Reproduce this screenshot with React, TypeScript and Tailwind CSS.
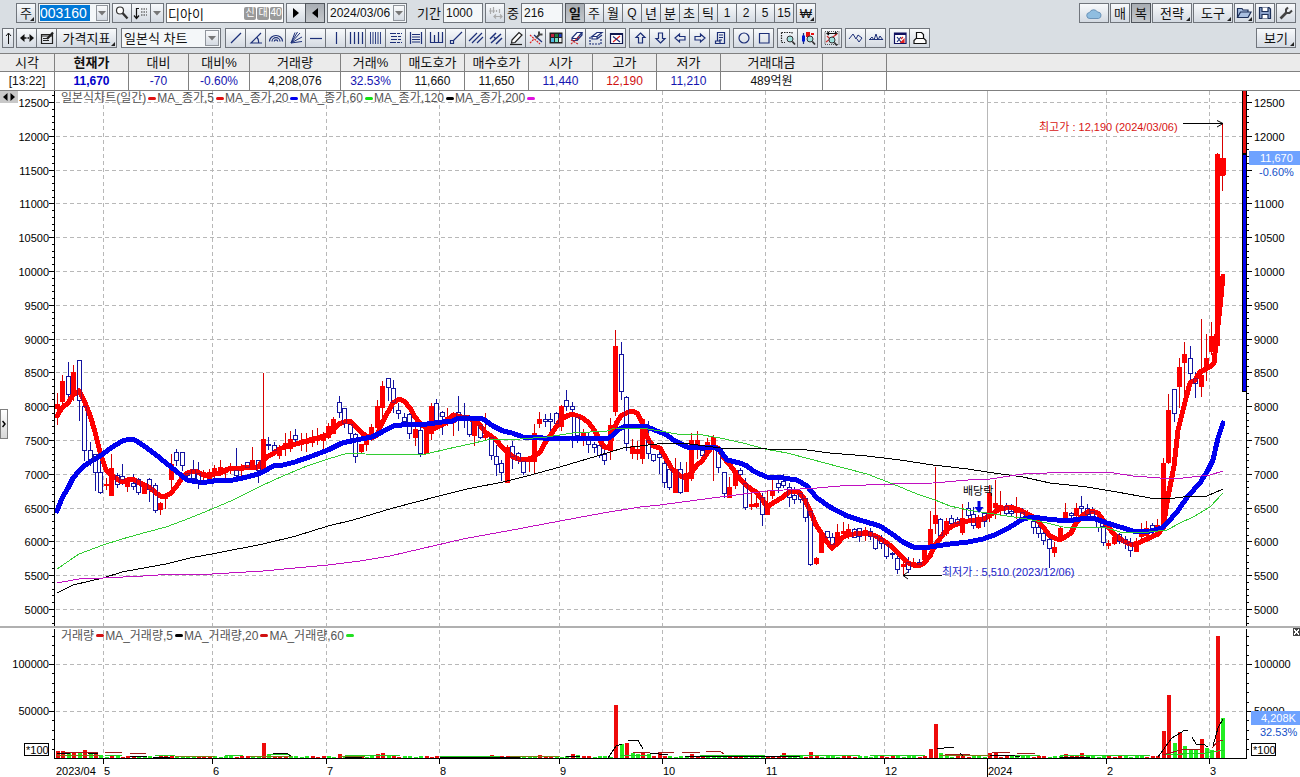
import React from "react";

type Candle = [number, number, number, number, 0 | 1];

const UP = "#fe0000";
const DOWN = "#1414a0";
const GREEN = "#22ee22";

const STEP = 5.42;
const X0 = 57;

// high, body top, body bottom, low (chart rows), 1 = rising / 0 = falling
const RAW =
  "393,404,408,424,1 375,381,401,403,1 362,376,394,400,0 365,372,395,400,1 360,360,400,420,0 402,406,450,460,0 442,450,462,465,0 454,454,472,490,0 460,472,492,493,0 478,484,485,489,1 " +
  "454,468,495,495,1 473,475,484,487,0 464,476,479,484,0 477,479,486,491,1 474,483,486,489,0 478,479,492,494,0 482,483,493,493,1 478,479,489,501,0 483,485,510,512,0 502,503,509,514,1 " +
  "493,494,498,508,1 454,464,479,487,1 449,452,460,465,0 452,452,465,470,0 470,473,475,480,0 460,469,478,483,0 462,473,483,488,0 470,472,475,480,1 469,472,478,483,1 465,468,472,477,1 " +
  "460,467,472,475,1 467,468,472,477,1 463,466,470,473,1 448,470,475,477,0 464,467,470,475,1 462,462,467,469,0 447,460,464,468,1 460,460,470,482,0 373,439,471,473,1 437,444,445,449,0 " +
  "442,445,450,453,0 445,448,455,458,1 433,443,447,455,1 431,439,448,451,1 429,435,439,442,0 433,440,444,450,1 433,439,443,451,1 430,438,442,446,1 428,437,440,444,1 432,437,440,451,1 " +
  "423,426,437,438,1 417,419,433,433,1 396,402,412,417,0 408,408,423,427,0 422,424,433,440,0 433,434,456,462,0 444,444,451,453,1 433,436,444,450,1 424,427,437,440,1 400,406,427,435,1 " +
  "381,386,407,423,1 378,378,387,400,0 380,388,402,412,0 403,410,413,418,0 413,417,421,424,0 413,414,433,438,0 427,429,437,445,1 427,430,453,456,0 428,428,453,453,1 403,406,433,439,1 " +
  "399,403,423,427,0 411,412,416,434,0 408,417,420,425,1 412,414,422,435,1 396,412,416,430,0 403,415,417,427,0 415,420,434,436,0 420,421,435,445,1 422,425,437,438,0 413,435,437,440,1 " +
  "437,437,455,459,0 445,456,464,475,0 460,463,472,480,0 445,447,482,482,1 441,446,456,468,0 452,453,460,463,0 457,461,472,474,0 456,457,461,471,1 424,433,461,472,1 412,419,423,427,1 " +
  "414,419,421,426,0 413,419,421,433,0 412,413,423,427,0 405,406,426,430,1 390,400,406,410,0 402,406,409,447,0 414,417,435,442,0 429,433,437,445,1 432,437,444,452,0 442,444,447,452,0 " +
  "437,445,455,457,0 448,454,460,464,0 418,425,450,459,1 330,346,411,415,1 342,354,391,399,0 396,397,443,450,0 439,446,453,458,1 441,449,453,459,1 418,419,458,463,1 421,440,453,458,0 " +
  "454,454,460,461,0 450,454,457,473,0 455,463,482,487,0 463,469,487,489,0 458,469,492,492,1 462,469,492,493,0 462,473,491,491,1 433,440,478,480,1 431,440,448,458,1 447,450,455,460,0 " +
  "438,442,452,455,1 435,437,444,480,1 447,448,467,472,0 472,472,493,497,0 477,487,497,497,1 468,470,485,488,1 468,470,474,478,0 478,483,507,509,0 493,504,506,509,1 494,503,506,507,1 " +
  "493,497,514,525,0 491,505,514,514,1 477,490,495,498,1 478,483,487,492,0 474,481,485,487,0 483,487,497,506,0 487,495,499,503,0 490,493,499,502,0 497,498,517,521,0 508,511,564,565,0 " +
  "557,558,563,564,1 530,533,552,552,1 531,531,537,543,0 533,537,544,548,0 524,532,543,543,1 522,531,533,537,1 524,529,533,538,1 528,529,537,537,0 528,528,536,541,0 527,530,534,540,1 " +
  "528,531,536,539,0 533,536,548,549,0 535,538,543,548,0 542,544,556,558,0 552,553,554,558,0 552,558,569,573,0 562,564,566,575,1 557,562,569,572,0 558,562,565,567,1 559,562,564,567,0 " +
  "547,548,559,559,1 511,529,548,550,1 467,515,523,533,1 518,519,535,536,0 518,521,533,535,1 515,518,523,528,0 517,519,523,526,0 504,518,532,534,1 502,508,515,518,0 507,514,525,528,0 " +
  "515,517,527,528,1 512,513,521,526,0 485,493,517,521,1 480,503,507,518,1 491,505,510,515,1 503,506,513,515,0 504,511,513,515,0 497,508,512,518,1 508,512,517,518,0 510,513,518,520,1 " +
  "518,521,527,533,0 520,527,533,537,0 528,533,540,544,0 535,539,548,567,0 542,547,552,556,1 526,528,538,538,1 503,512,522,522,1 512,513,515,517,0 503,508,515,520,1 496,506,508,512,0 " +
  "504,508,514,515,0 507,511,517,518,0 518,520,527,531,0 525,526,542,545,0 540,543,545,548,1 533,537,543,544,1 533,534,541,543,0 536,539,543,548,0 538,542,550,556,0 538,541,551,551,1 " +
  "523,530,536,538,1 521,528,535,537,1 523,525,530,533,0 519,525,531,532,1 458,463,528,529,1 394,410,462,463,1 389,389,413,421,0 358,367,386,407,1 342,354,362,397,1 346,358,373,385,0 " +
  "372,378,383,397,0 319,375,386,396,1 334,358,366,380,1 322,336,351,354,1 153,154,345,350,1 123,158,175,190,1";

const CANDLES = RAW.split(" ").map((c) => c.split(",").map(Number) as unknown as Candle);

const MA5 =
  "57,416 62,408 68,403 73,395 79,391 84,400 90,415 95,432 100,452 106,470 111,475 117,479 122,482 127,480 133,479 138,482 144,485 149,487 155,492 160,496 166,496 171,493 176,487 182,478 187,473 193,471 198,472 203,475 209,476 214,474 220,473 225,471 230,468 241,468 258,467 262,462 267,457 274,453 279,449 285,447 296,444 306,441 317,438 328,435 333,430 339,424 344,422 350,421 355,426 361,432 366,436 372,438 377,435 382,423 388,412 393,403 399,399 404,401 410,408 415,417 420,423 426,428 431,430 437,427 445,423 453,415 462,417 469,418 475,421 480,425 485,432 491,436 496,440 502,447 507,452 512,456 518,459 523,460 529,459 534,457 540,452 545,443 550,436 556,427 561,419 567,416 572,414 578,416 583,418 589,423 594,430 599,438 603,446 607,448 610,445 613,432 617,422 621,416 626,413 632,411 637,413 642,422 648,439 653,446 660,448 664,455 672,469 680,476 687,478 691,473 697,465 702,461 708,452 713,446 718,448 724,458 729,464 735,472 740,479 746,485 751,489 756,492 762,499 767,507 773,503 778,500 783,497 789,492 794,491 800,493 805,500 811,513 816,525 822,534 827,542 832,548 838,543 843,537 849,535 859,533 870,534 876,536 887,543 892,547 898,553 903,558 908,563 914,565 919,566 924,563 930,556 935,545 941,537 946,531 952,526 960,523 968,521 979,520 984,519 990,515 995,512 1000,509 1011,507 1022,511 1033,517 1038,521 1044,528 1049,535 1054,538 1060,540 1065,537 1071,533 1076,523 1082,516 1087,512 1092,511 1098,513 1103,520 1109,528 1114,534 1119,538 1125,542 1130,544 1136,544 1147,539 1158,534 1163,528 1168,497 1174,466 1178,430 1185,402 1190,383 1195,380 1200,372 1206,369 1211,366 1214,363 1215,353 1220,307 1223,276";
const MA20 =
  "57,511 62,498 68,488 73,478 79,471 84,466 90,462 100,456 111,448 122,441 130,439 135,440 144,446 155,454 166,463 176,471 182,476 187,480 198,482 207,482 220,480 233,480 247,477 258,474 263,472 273,466 283,465 295,462 312,456 328,450 342,443 361,439 372,437 382,432 393,426 410,424 427,424 442,422 453,421 458,418 467,419 477,418 483,419 493,426 503,431 512,433 523,437 543,438 570,438 607,439 613,435 618,430 623,427 632,426 645,426 657,431 667,435 675,441 687,447 702,447 713,447 720,450 727,460 740,463 747,466 755,472 767,477 783,478 797,480 807,486 817,498 830,507 847,516 863,521 880,526 892,534 903,542 913,547 930,547 950,544 968,542 983,539 997,534 1010,527 1023,519 1033,517 1047,519 1067,521 1080,519 1093,518 1107,523 1120,527 1133,531 1150,531 1162,528 1167,523 1177,512 1188,496 1200,483 1208,470 1213,460 1218,438 1223,423";
const MA60 =
  "57,569 79,554 103,545 122,539 147,532 166,527 190,518 212,509 233,500 263,485 283,476 307,466 328,459 348,453 365,454 410,455 426,454 447,449 470,444 487,440 520,439 547,437 573,433 607,431 615,428 648,429 660,431 677,434 697,434 720,438 743,443 765,449 787,453 810,459 840,467 867,474 893,484 917,494 935,500 950,506 968,510 987,513 1007,516 1027,519 1047,523 1063,527 1107,528 1120,532 1140,533 1167,530 1180,523 1193,517 1210,507 1223,493";
const MA120 =
  "57,593 73,585 103,578 122,572 166,564 190,558 212,554 263,544 296,536 328,526 353,520 393,508 439,496 467,489 503,482 527,476 560,467 597,456 623,448 648,445 667,443 690,444 720,448 767,449 807,450 830,453 867,456 900,460 933,465 968,469 987,472 1023,477 1050,483 1087,487 1117,492 1150,498 1168,499 1183,497 1207,496 1223,489";
const MA200 =
  "57,583 79,579 103,578 143,576 173,574 212,574 263,571 295,568 328,565 360,561 390,556 420,549 463,539 507,531 560,521 603,513 640,507 660,505 690,501 720,497 767,491 817,488 840,486 893,484 933,483 968,480 990,479 1023,474 1047,473 1077,472 1107,472 1133,476 1160,478 1183,478 1210,475 1223,471";

// bar heights that rise above the background level, keyed by session index
const TALL: Record<number, [number, 0 | 1]> = {
  0: [7, 1], 1: [7, 1], 2: [5, 0], 3: [6, 1], 4: [5, 0], 5: [8, 1], 6: [4, 0], 7: [5, 1], 8: [3, 0],
  10: [3, 1], 11: [2, 0], 21: [3, 1], 38: [15, 1], 39: [4, 0], 52: [4, 1], 59: [4, 1], 60: [5, 1], 61: [3, 0],
  80: [3, 1], 89: [3, 1], 95: [4, 1], 96: [3, 0], 103: [53, 1], 104: [14, 0], 105: [15, 1], 106: [5, 0],
  107: [4, 0], 108: [5, 1], 109: [4, 0], 111: [5, 1], 117: [4, 1], 134: [5, 1], 139: [6, 1], 161: [9, 1],
  162: [34, 1], 163: [5, 0], 172: [5, 1], 173: [6, 1], 186: [4, 1], 189: [5, 1], 204: [27, 1], 205: [63, 1],
  206: [15, 0], 207: [26, 1], 208: [12, 0], 209: [8, 0], 210: [8, 0], 211: [19, 1], 212: [10, 0], 213: [8, 0],
  214: [122, 1], 215: [40, 0],
};

const MONTHS: [number, string][] = [
  [103, "5"], [212, "6"], [326, "7"], [439, "8"], [559, "9"], [662, "10"], [765, "11"], [884, "12"], [987, "2024"], [1106, "2"], [1209, "3"],
];
const PRICES = Array.from({ length: 16 }, (_, i) => 12500 - i * 500);
const priceY = (p: number) => Math.round(102 + (12500 - p) * 0.0676) + 0.5;

function Chart() {
  const minor: number[] = [];
  for (let p = 12600; p >= 4800; p -= 100) if (p % 500) minor.push(priceY(p));
  const volMinor: number[] = [];
  for (let v = 1; v < 14; v++) if (v % 5) volMinor.push(Math.round(758 - v * 9.4) + 0.5);
  return (
    <svg viewBox="0 91 1300 686" className="block h-auto w-full font-['Liberation_Sans','Noto_Sans_CJK_KR',sans-serif]" fontSize="11" role="img" aria-label="디아이 일간 차트">
      <g stroke="#b8b8b8" strokeDasharray="4 3" shapeRendering="crispEdges">
        {PRICES.map((p) => <path key={p} d={`M56 ${priceY(p)}H1242`} />)}
        <path d="M56 664.5H1246M56 711.5H1246" />
        {MONTHS.filter((m) => m[1] !== "2024").map(([x]) => <path key={x} d={`M${x + 0.5} 91V757`} />)}
      </g>
      <path d="M987.5 91V757" stroke="#b8b8b8" shapeRendering="crispEdges" />

      <g shapeRendering="crispEdges">
        {CANDLES.map(([h, t, b, l, up], i) => {
          const x = Math.round(X0 + STEP * i);
          return up ? (
            <g key={i} fill={UP}>
              <rect x={x} y={h} width="1" height={l - h + 1} fill="#d80000" />
              <rect x={x - 2} y={t} width="5" height={Math.max(2, b - t + 1)} />
            </g>
          ) : (
            <g key={i}>
              <rect x={x} y={h} width="1" height={l - h + 1} fill={DOWN} />
              <rect x={x - 1.5} y={t + 0.5} width="4" height={Math.max(1, b - t)} fill="#fff" stroke={DOWN} />
            </g>
          );
        })}
        <rect x="1220" y="158" width="6" height="17" fill={UP} />
      </g>

      <g fill="none" strokeLinejoin="round" strokeLinecap="round" shapeRendering="crispEdges">
        <polyline points={MA5} stroke={UP} strokeWidth="5" />
        <polyline points={MA20} stroke="#0000f0" strokeWidth="5" />
      </g>
      <g fill="none" shapeRendering="crispEdges" opacity="0.45" stroke={DOWN}>
        {CANDLES.map(([, t, b, , up], i) =>
          up ? null : <rect key={i} x={Math.round(X0 + STEP * i) - 1.5} y={t + 0.5} width="4" height={Math.max(1, b - t)} />,
        )}
      </g>
      <g fill="none" shapeRendering="crispEdges">
        <polyline points={MA60} stroke="#3c3" />
        <polyline points={MA120} stroke="#000" />
        <polyline points={MA200} stroke="#c010c0" />
      </g>

      <g shapeRendering="crispEdges">
        {CANDLES.map((_, i) => {
          const tall = TALL[i];
          const h = tall ? tall[0] : 1 + ((i * 7) % 3 > 0 ? 1 : 0);
          const red = tall ? tall[1] : (i * 13) % 7 < 3;
          return <rect key={i} x={Math.round(X0 + STEP * i) - 1} y={758 - h} width="4" height={h} fill={red ? "#ee0a0a" : GREEN} />;
        })}
        <g fill="none">
          <path stroke="#7a7a10" d="M57 755H100M175 756H215M250 756H292M340 756H365M510 756H560M940 755H990M1180 753H1200" />
          <path stroke="#2c2" d="M105 755H122M155 755H175M225 755H243M268 754H290M345 755H400M440 756H500M620 755H650M700 755H765M780 755H860M870 755H925M1000 755H1040M1060 755H1150M1162 755L1205 753L1224 750" />
          <path stroke="#a01818" d="M62 752H98M105 752H122M130 753H146M633 752H650M658 752H674M682 752H700M706 751H720L724 754M945 754H970M992 752H1010M1017 753H1035M1162 755L1185 749H1200M1212 748L1217 742L1223 740" />
          <path stroke="#000" d="M57 753H70M88 753H98M130 756H147M153 757H170M273 753H286L291 756M345 757H362M440 757H520M566 756H580M608 758L616 746L622 744M628 741L632 740H638L643 749M650 753L668 755M685 756H800M937 748H944L954 747M960 753L963 756M990 755H1010L1020 757M1060 757H1090M1158 757L1166 746L1172 738L1185 730L1188 731M1192 737L1196 744H1203L1208 747M1213 746L1218 728L1223 719" />
        </g>
      </g>

      <rect x="0" y="626" width="1300" height="2" fill="#b0b0b0" />

      <g fill="#000" shapeRendering="crispEdges">
        <rect x="54" y="91" width="1" height="535" /><rect x="54" y="629" width="1" height="130" />
        <rect x="1246" y="91" width="1" height="535" /><rect x="1246" y="629" width="1" height="130" />
        <rect x="54" y="758" width="1193" height="1" />
        <rect x="1242" y="91" width="5" height="301" />
        <rect x="1243" y="91" width="3" height="62" fill="#e81010" />
        <rect x="1243" y="155" width="3" height="236" fill="#0000f0" />
      </g>
      <g stroke="#000" shapeRendering="crispEdges">
        {PRICES.map((p) => <path key={p} d={`M49 ${priceY(p)}H55M1247 ${priceY(p)}H1252`} />)}
        <path d="M49 664.5H55M49 711.5H55M1247 664.5H1252M1247 711.5H1252" />
        {[...minor, ...volMinor].map((y) => <path key={y} d={`M52 ${y}H55M1247 ${y}H1249`} />)}
        {MONTHS.map(([x, t]) => <path key={x} d={`M${x + 0.5} 758V${t === "2024" ? 777 : 764}`} />)}
      </g>
      <g fill="#000">
        {PRICES.map((p) => (
          <React.Fragment key={p}>
            <text x="49" y={priceY(p) + 4} textAnchor="end">{p}</text>
            {p !== 11500 && <text x="1254" y={priceY(p) + 4}>{p}</text>}
          </React.Fragment>
        ))}
        <text x="49" y="668" textAnchor="end">100000</text>
        <text x="49" y="715" textAnchor="end">50000</text>
        <text x="1254" y="668">100000</text>
        <text x="1254" y="715">50000</text>
        <text x="56" y="775">2023/04</text>
        {MONTHS.map(([x, t]) => <text key={x} x={x + 1} y="775">{t}</text>)}
      </g>
      <g fill="#fff" stroke="#000" shapeRendering="crispEdges">
        <rect x="24.5" y="743.5" width="24" height="12" />
        <rect x="1251.5" y="743.5" width="24" height="12" />
      </g>
      <text x="26" y="754">*100</text>
      <text x="1253" y="754">*100</text>

      <rect x="1249" y="151" width="51" height="14" fill="#6ea2ff" />
      <text x="1260" y="162" fill="#fff">11,670</text>
      <text x="1259" y="176" fill="#1450c8">-0.60%</text>
      <rect x="1251" y="711" width="49" height="14" fill="#6ea2ff" />
      <text x="1261" y="722" fill="#fff">4,208K</text>
      <text x="1260" y="736" fill="#1450c8">32.53%</text>

      <text x="1039" y="131" fill="#d81414">최고가 : 12,190 (2024/03/06)</text>
      <path d="M1183 123.5H1223M1217 120.5L1223 123.5L1217 127" fill="none" stroke="#000" />
      <text x="942" y="576" fill="#2020c8">최저가 : 5,510 (2023/12/06)</text>
      <path d="M942 575.5H903M908 572L903 575.5L908 579" fill="none" stroke="#000" />
      <text x="963" y="495" fill="#000">배당락</text>
      <path d="M977.5 501h3v6h3l-4.500 6l-4.500-6h3z" fill="#0000e0" />

      <g shapeRendering="crispEdges">
        <rect x="1293" y="628" width="7" height="8" fill="#444" />
        <path d="M1294 629.5l5 5M1299 629.500l-5 5" stroke="#fff" />
      </g>
    </svg>
  );
}

// each entry's dash carries its colour after the label; the first dash belongs to the panel name
function Legend({ name, color, items }: { name: string; color: string; items: [string, string][] }) {
  return (
    <ul className="flex items-center gap-px whitespace-nowrap font-['Liberation_Sans','Noto_Sans_CJK_KR',sans-serif] text-[12px] leading-[14px] text-[#555]">
      {[[name, color] as [string, string], ...items].map(([label, dash]) => (
        <li key={label} className="flex items-center gap-px">
          <span className="first:pr-px">{label}</span>
          <span className="h-[3px] w-2 rounded-full" style={{ backgroundColor: dash }} />
        </li>
      ))}
    </ul>
  );
}

const BTN = "relative flex h-5 shrink-0 items-center justify-center border border-[#70757c] bg-linear-to-b from-[#f8fafc] to-[#d4dae2] text-[#111]";
const DARK = "relative flex h-5 shrink-0 items-center justify-center border border-[#50555c] bg-linear-to-b from-[#a8adb3] to-[#c4c8cc] text-[#111]";
const FIELD = "flex h-5 shrink-0 items-center border border-[#70757c] bg-[#f4f7f9]";

function Corner() {
  return <svg className="absolute right-px bottom-px size-1" viewBox="0 0 4 4" aria-hidden="true"><path d="M4 0V4H0z" fill="#222" /></svg>;
}

function Btn({ label, w, dark, menu, joined, children }: { label: string; w: string; dark?: boolean; menu?: boolean; joined?: boolean; children: React.ReactNode }) {
  return (
    <button type="button" aria-label={label} className={`${dark ? DARK : BTN} ${w} ${joined ? "-ml-px" : ""}`}>
      {children}
      {menu && <Corner />}
    </button>
  );
}

function Arrow() {
  return (
    <button type="button" aria-label="목록 열기" className="mr-px flex h-4 w-3 shrink-0 items-center justify-center border border-[#90959c] bg-linear-to-b from-[#fafbfc] to-[#d4dae2]">
      <svg viewBox="0 0 8 5" className="h-[5px] w-2" aria-hidden="true"><path d="M0 0h8L4 4.500z" fill="#777" /></svg>
    </button>
  );
}

function Ic({ children }: { children: React.ReactNode }) {
  return <svg viewBox="0 0 16 16" className="size-4 shrink-0" fill="none" stroke="#1c2f78" strokeWidth="1.2" aria-hidden="true">{children}</svg>;
}

const Lens = () => (
  <>
    <circle cx="10" cy="9" r="3" fill="#9ee0dc" stroke="#333" strokeWidth="1" />
    <path d="M12.300 11.500L15 14.500" stroke="#333" strokeWidth="1.800" />
  </>
);

const DRAW: [string, React.ReactNode][] = [
  ["추세선", <path key="a" d="M3 13L13 3" />],
  ["각도선", <path key="a" d="M13 3L3 13H14M9 7.500Q11 9.500 10.500 13" />],
  ["원호", <path key="a" d="M1.500 11.500a6.500 6 0 0 1 13 0M4 11.500a4 3.800 0 0 1 8 0M6.300 11.500a1.700 1.700 0 0 1 3.400 0" />],
  ["부채꼴", <path key="a" d="M3 13L7 2.500M3 13L12 3M3 13L14 7M3 13L14 11.500M3 13L9.500 2" strokeWidth="1" />],
  ["수평선", <path key="a" d="M2 8.500H14" />],
  ["수직선", <path key="a" d="M8.500 2V14" />],
  ["피보나치 시간대", <path key="a" d="M2.500 2V14M6.500 2V14M10.500 2V14M14.500 2V14" />],
  ["등간격선", <path key="a" d="M2.500 2V14M5 2V14M7.500 2V14M10 2V14M12.500 2V14" strokeWidth="0.900" />],
  ["조정대", <path key="a" d="M2 3.500H14M2 12.500H14M3 6.500H13M3 9.500H13" strokeDasharray="6 1 3 1" />],
  ["가격 분할", <path key="a" d="M2.500 2V14M13.500 2V14M4 4.500H12M4 7H12M4 9.500H12M4 12H12" />],
  ["시간 분할", <path key="a" d="M2.500 2V13M6.500 5V13M10.500 2V13M14.500 2V13M2 12.500H15" />],
  ["반직선", <path key="a" d="M2.500 10.500h3v3h-3zM5.500 10.500L14 2" />],
  ["평행선", <path key="a" d="M1 11L9 3M4 13L14 3M9 13L15 7" />],
  ["채널", <path key="a" d="M2 9L8 3M3 13L13 4M8 14L14 8M6 7l2 2" strokeWidth="1.500" />],
  ["펜", <g key="a"><path d="M4 10L11 2.500L14 5L7 12.500L3.500 13z" fill="#fff" stroke="#222" /><path d="M2 14.500H14" stroke="#222" /></g>],
  ["도구", <g key="a"><path d="M2 5L12 14M2 13L6 9" stroke="#e02020" strokeDasharray="2 1" /><path d="M6 5L14 12" /><path d="M8 8L12 4M11 1.500V4.500H14.500" stroke="#444" strokeWidth="2" /></g>],
  ["색상", <g key="a" stroke="none"><path d="M1.500 2.500h13v11h-13z" fill="#222" /><path d="M3 4h3v3H3z" fill="#c02040" /><path d="M7 4h3v3H7z" fill="#208040" /><path d="M11 4h2.500v3H11z" fill="#2040c0" /><path d="M3 8h3v4H3z" fill="#50b8e0" /><path d="M7 8h3v4H7z" fill="#70e0c0" /><path d="M11 8h2.500v4H11z" fill="#eee" /></g>],
  ["지우개", <g key="a"><path d="M4 8L9 2.500H14L9 8.500H4zM4 8V10.500H9V8.500M9 10.500L14 5V2.500" fill="#fff" /><path d="M3 14L12 6M3 10l7 4" stroke="#d03030" strokeDasharray="2 1" /></g>],
  ["영역 지우기", <g key="a"><path d="M2 7V14H13V8" strokeDasharray="2 1" /><path d="M4 6.500L9 2.500H14L9 6.500H4zM4 6.500V9H9V6.500M9 9L14 5" fill="#fff" /></g>],
  ["전체 삭제", <g key="a"><path d="M2.500 3.500H14.500V13.500H2.500z" fill="#fff" stroke="#101850" /><path d="M2.500 4H14.500" stroke="#101850" strokeWidth="2" /><path d="M5 12L12 6" stroke="#e02020" /><path d="M5 6.500L12 12" /></g>],
];

const ARROWS: [string, React.ReactNode][] = [
  ["위 화살표", <path key="a" d="M8.500 3L13 7.500H10.500V13H6.500V7.500H4z" />],
  ["아래 화살표", <path key="a" d="M8.500 13L13 8.500H10.500V3H6.500V8.500H4z" />],
  ["왼쪽 화살표", <path key="a" d="M3 8L7.500 4V6.500H13V10H7.500V12z" />],
  ["오른쪽 화살표", <path key="a" d="M13 8L8.500 4V6.500H3V10H8.500V12z" />],
  ["메모", <path key="a" d="M5.500 2.500H12.500V13.500H3.500V11H5.500zM7 5H11M7 7.500H11M7 10H10M5.500 11H8V13" />],
];

function Row({ items }: { items: [string, React.ReactNode][] }) {
  return (
    <div className="flex shrink-0">
      {items.map(([label, icon]) => (
        <button key={label} type="button" aria-label={label} className={`${BTN} w-[21px] -mr-px`}><Ic>{icon}</Ic></button>
      ))}
    </div>
  );
}

const COLS: [string, string, string, string][] = [
  ["시각", "[13:22]", "text-[#111]", "w-[55px]"],
  ["현재가", "11,670", "text-[#0000c8] font-bold", "w-[74px]"],
  ["대비", "-70", "text-[#1414b0]", "w-[60px]"],
  ["대비%", "-0.60%", "text-[#1414b0]", "w-[61px]"],
  ["거래량", "4,208,076", "text-[#111]", "w-[91px]"],
  ["거래%", "32.53%", "text-[#1414b0]", "w-[60px]"],
  ["매도호가", "11,660", "text-[#111]", "w-16"],
  ["매수호가", "11,650", "text-[#111]", "w-16"],
  ["시가", "11,440", "text-[#1414b0]", "w-16"],
  ["고가", "12,190", "text-[#d01010]", "w-16"],
  ["저가", "11,210", "text-[#1414b0]", "w-16"],
  ["거래대금", "489억원", "text-[#111]", "w-[102px]"],
  ["", "", "", "w-16"],
  ["", "", "", ""],
];

export default function App() {
  return (
    <main className="min-h-screen overflow-x-hidden bg-white font-['Liberation_Sans','Noto_Sans_CJK_KR',sans-serif] text-[13px] leading-none text-[#111]">
      <header className="flex flex-col gap-[5px] bg-[#d9dee3] pt-[3px] pb-[5px]">
        <div className="flex items-center gap-0.5 pr-1 pl-4">
          <Btn label="주식" w="w-5" menu>주</Btn>
          <div className={`${FIELD} w-[72px] justify-between pl-px`}>
            <input aria-label="종목코드" defaultValue="003160" className="h-4 w-[50px] bg-[#0078d7] text-[14px] text-white outline-none" />
            <Arrow />
          </div>
          <div className="flex">
            <Btn label="종목 검색" w="w-5"><Ic><circle cx="6" cy="5.500" r="3.500" stroke="#333" fill="#fff" /><path d="M8.500 8L13.500 13.500" stroke="#333" strokeWidth="2.400" /></Ic></Btn>
            <Btn label="관심 종목" w="w-5" joined><Ic><path d="M3.500 3V13M1 10.500L3.500 13.500L6 10.500M6 3.500H3.500" stroke="#111" /><path d="M8 4H14M8 7H14M8 10H14" stroke="#333" strokeDasharray="1.500 1" /></Ic></Btn>
            <Btn label="관심 종목 메뉴" w="w-3.5" joined><svg viewBox="0 0 8 5" className="h-[5px] w-2" aria-hidden="true"><path d="M0 0h8L4 4.500z" fill="#777" /></svg></Btn>
          </div>
          <div className={`${FIELD} w-[118px] gap-px bg-white px-px`}>
            <input aria-label="종목명" defaultValue="디아이" className="w-0 grow bg-transparent outline-none" />
            {["신", "대", "40"].map((t) => <span key={t} className="flex h-[13px] w-3 items-center justify-center rounded-xs bg-[#9a9a9a] text-[10px] text-white">{t}</span>)}
          </div>
          <div className="flex">
            <Btn label="다음 종목" w="w-5"><svg viewBox="0 0 6 10" className="h-2.5 w-1.5" aria-hidden="true"><path d="M0 0L6 5L0 10z" fill="#000" /></svg></Btn>
            <Btn label="이전 종목" w="w-5" dark joined><svg viewBox="0 0 6 10" className="h-2.5 w-1.5" aria-hidden="true"><path d="M6 0L0 5L6 10z" fill="#000" /></svg></Btn>
          </div>
          <div className={`${FIELD} w-20 pl-0.5`}>
            <input aria-label="기준일" defaultValue="2024/03/06" className="w-0 grow bg-transparent text-[12px] outline-none" />
            <Arrow />
          </div>
          <label htmlFor="period" className="w-8 shrink-0 pl-2 whitespace-nowrap">기간</label>
          <div className={`${FIELD} w-10 pl-0.5`}><input id="period" defaultValue="1000" className="w-0 grow bg-transparent text-[12px] outline-none" /></div>
          <Btn label="간격 조절" w="w-5"><Ic><path d="M3.500 3V9M6.500 2V8M9.500 5V7M7 11.500H15M9 9.500L7 11.500L9 13.500M13 9.500L15 11.500L13 13.500M2 6H8M12.500 4V8" stroke="#aaa" /></Ic></Btn>
          <label htmlFor="count" className="w-3 shrink-0">중</label>
          <div className={`${FIELD} w-[42px] pl-0.5`}><input id="count" defaultValue="216" className="w-0 grow bg-transparent text-[12px] outline-none" /></div>
          <div className="flex">
            {["일", "주", "월", "Q", "년", "분", "초", "틱", "1", "2", "5", "15"].map((t, i) => (
              <button key={t} type="button" aria-pressed={i === 0} className={`${i === 0 ? DARK : BTN} -mr-px w-5 ${i === 0 ? "font-bold" : ""} ${i > 7 || i === 3 ? "text-[12px]" : ""}`}>{t}</button>
            ))}
          </div>
          <div className="pl-px"><Btn label="통화" w="w-5" menu>₩</Btn></div>
          <div className="ml-auto flex gap-px">
            <Btn label="클라우드" w="w-[30px]"><svg viewBox="0 0 16 11" className="h-[11px] w-4" aria-hidden="true"><path d="M4 10.500a3 3 0 0 1-.5-6A4.500 4.500 0 0 1 11.500 4a3.300 3.300 0 0 1 1 6.500z" fill="#8fbde0" stroke="#6b93b8" /></svg></Btn>
            <Btn label="매매" w="w-5">매</Btn>
            <Btn label="복기" w="w-5" dark>복</Btn>
            <Btn label="전략" w="w-10" menu>전략</Btn>
            <Btn label="도구" w="w-10" menu>도구</Btn>
            <Btn label="열기" w="w-5" menu><Ic><path d="M1.500 12.500V3.500H6L7 5H12V7M1.500 12.500L4.500 7H15L12 12.500z" fill="#a9bfe0" stroke="#1c2f58" /></Ic></Btn>
            <Btn label="저장" w="w-5"><Ic><path d="M2.500 2.500H12L13.500 4V13.500H2.500z" fill="#8ea4cc" stroke="#1c2f58" /><path d="M5 2.500V6.500H11V2.500M5 13.500V9.500H11V13.500" fill="#fff" stroke="#1c2f58" /></Ic></Btn>
            <Btn label="설정" w="w-5"><Ic><path d="M2.500 13.500L9 7" stroke="#444" strokeWidth="2.600" /><path d="M10 2.500L8 4.500V8H11.500L14 5.500" stroke="#444" strokeWidth="2" /></Ic></Btn>
          </div>
        </div>
        <div className="flex items-center gap-1 pr-1 pl-0.5">
          <div className="flex gap-0.5">
            <Btn label="위로" w="w-3"><svg viewBox="0 0 8 12" className="h-3 w-2" fill="none" stroke="#111" aria-hidden="true"><path d="M4.500 12V1.500M2 4L4.500 1L7 4" /></svg></Btn>
            <div className="flex">
              <Btn label="좌우 이동" w="w-[21px]"><svg viewBox="0 0 14 8" className="h-2 w-3.5" aria-hidden="true"><path d="M0 4L4.500 0V8zM14 4L9.500 0V8zM4 3.200h2.500v1.600H4zM7.500 3.200H10v1.600H7.500z" fill="#111" /></svg></Btn>
              <Btn label="편집" w="w-[21px]" joined><Ic><path d="M2.500 4.500H13.500V13.500H2.500zM2.500 6H13.500M4 8.500H8M4 10.500H10" stroke="#222" /><path d="M8 9L14 2.500" stroke="#222" strokeWidth="2.200" /></Ic></Btn>
              <Btn label="가격지표" w="w-[61px]" menu joined>가격지표</Btn>
            </div>
          </div>
          <div className={`${FIELD} relative w-[100px]`}>
            <select aria-label="차트 종류" className="h-[18px] w-full appearance-none bg-transparent pl-0.5 outline-none"><option>일본식 차트</option></select>
            <span className="pointer-events-none absolute top-px right-px flex h-4 w-3.5 items-center justify-center border border-[#90959c] bg-linear-to-b from-[#fafbfc] to-[#d4dae2]">
              <svg viewBox="0 0 8 5" className="h-[5px] w-2" aria-hidden="true"><path d="M0 0h8L4 4.500z" fill="#777" /></svg>
            </span>
          </div>
          <Row items={DRAW} />
          <Row items={ARROWS} />
          <Row items={[["원", <circle key="a" cx="8" cy="8" r="5" />], ["사각형", <path key="a" d="M3.500 3.500H13V13H3.500z" />]]} />
          <Row items={[
            ["영역 확대", <g key="a"><path d="M1.500 2.500H12V4M1.500 2.500V12.500H5" stroke="#222" strokeDasharray="1.500 1" /><Lens /></g>],
            ["봉 확대", <g key="a"><path d="M3.500 3V14" /><path d="M2 5.500h3v6H2z" fill="#0018d0" stroke="none" /><path d="M6 2h4v5H6zM11 3h3v2h-3z" fill="#e81010" stroke="none" /><Lens /></g>],
          ]} />
          <Row items={[["전체 보기", <g key="a"><path d="M1 1.500H15V14.500H1z" stroke="#555" strokeDasharray="1 1" /><path d="M3 3.500H13M5 2L3 3.500L5 5M11 2L13 3.500L11 5" stroke="#111" /><path d="M2 12L13 4M3 6L7 10" stroke="#d03030" /><g transform="translate(-2 1)"><Lens /></g></g>]]} />
          <Row items={[
            ["파동 1", <path key="a" d="M1 9L5 4L8 9L10 5L14 8L11 12L9 9" strokeWidth="1" />],
            ["파동 2", <path key="a" d="M1 10L4 7L6 10L8 4L10 10L12 6L15 10M1 9.500H15" strokeWidth="1" />],
          ]} />
          <Row items={[
            ["차트 삭제", <g key="a"><path d="M2.500 3H14V13.500H2.500z" fill="#fff" stroke="#101060" /><path d="M2.500 4H14" stroke="#101060" strokeWidth="2" /><path d="M5 7L9 12M9 7L5 12" /><path d="M11 7L9 9M9 12.500h3v-3z" stroke="#e02020" /></g>],
            ["인쇄", <path key="a" d="M4.500 8.500V2.500H9.500L11.500 4.500V8.500M2 13.500V10.500L4 8.500H12L14 10.500V13.500z" stroke="#111" fill="#fff" />],
          ]} />
          <div className="ml-auto"><Btn label="보기" w="w-10" menu>보기</Btn></div>
        </div>
      </header>

      <table className="w-full table-fixed border-separate border-spacing-0 border-t border-[#808080] text-center">
        <thead>
          <tr className="h-[18px] bg-[#ebebeb]">
            {COLS.map(([h, , , w], i) => (
              <th key={i} scope="col" className={`${w} border-r border-b border-[#808080] p-0 whitespace-nowrap last:border-r-0 ${i === 1 ? "font-bold" : "font-normal"}`}>{h}</th>
            ))}
          </tr>
        </thead>
        <tbody>
          <tr className="h-[19px]">
            {COLS.map(([, v, c], i) => (
              <td key={i} className={`${c} border-r border-b border-[#808080] p-0 text-[12px] whitespace-nowrap last:border-r-0`}>{v}</td>
            ))}
          </tr>
        </tbody>
      </table>

      <section aria-label="차트" className="relative">
        <Chart />
        <button type="button" aria-label="좌우 확장" className="absolute top-0 left-0 flex h-3 w-[18px] items-center justify-center bg-[#c8c8c8]">
          <svg viewBox="0 0 12 8" className="h-2 w-3" aria-hidden="true"><path d="M0 4L4.500 0V8zM12 4L7.500 0V8z" fill="#000" /></svg>
        </button>
        <button type="button" aria-label="패널 열기" className="absolute top-[46.300%] left-0 flex h-[30px] w-2 items-center justify-center border border-[#808080] bg-linear-to-b from-white to-[#d8d8d8]">
          <svg viewBox="0 0 4 8" className="h-2 w-1" fill="none" stroke="#000" strokeWidth="1.500" aria-hidden="true"><path d="M0.500 1L3 4L0.500 7" /></svg>
        </button>
        <div className="absolute top-0 left-[61px]">
          <Legend name="일본식차트(일간)" color="#e01010" items={[["MA_종가,5", "#e01010"], ["MA_종가,20", "#0000f0"], ["MA_종가,60", "#10e010"], ["MA_종가,120", "#000"], ["MA_종가,200", "#e010e0"]]} />
        </div>
        <div className="absolute top-[78.400%] left-[61px]">
          <Legend name="거래량" color="#d01010" items={[["MA_거래량,5", "#000"], ["MA_거래량,20", "#d01010"], ["MA_거래량,60", "#22e022"]]} />
        </div>
      </section>
    </main>
  );
}
